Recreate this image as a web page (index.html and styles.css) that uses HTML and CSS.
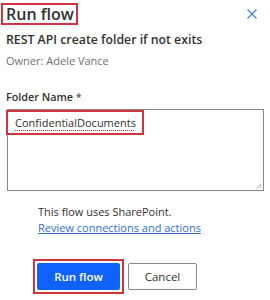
FILE: index.html
```html
<!DOCTYPE html>
<html lang="en">
<head>
    <meta charset="UTF-8">
    <meta name="viewport" content="width=device-width, initial-scale=1.0">
    <title>Run flow</title>
    <link rel="stylesheet" href="styles.css">
</head>
<body>
    <div class="panel">
        <div class="panel-header">
            <h1 class="panel-title highlight">Run flow</h1>
            <button class="close-button" aria-label="Close">
                <svg viewBox="0 0 10 10" fill="none" stroke="currentColor" stroke-width="1.1">
                    <path d="M0.5 0.5L9.5 9.5M9.5 0.5L0.5 9.5"/>
                </svg>
            </button>
        </div>

        <h2 class="flow-name">REST API create folder if not exits</h2>
        <p class="flow-owner">Owner: Adele Vance</p>

        <label class="field-label">Folder Name <span class="required">*</span></label>
        <div class="field-input">
            <span class="field-value highlight">ConfidentialDocuments</span>
            <svg class="resize-grip" viewBox="0 0 6 6" fill="none" stroke="#9a9a9a" stroke-width="0.8">
                <path d="M0.5 5.5L5.5 0.5M3 5.5L5.5 3"/>
            </svg>
        </div>

        <div class="flow-info">
            <p>This flow uses SharePoint.</p>
            <a href="#">Review connections and actions</a>
        </div>

        <div class="panel-actions">
            <span class="button-wrap highlight">
                <button class="primary-button">Run flow</button>
            </span>
            <button class="default-button">Cancel</button>
        </div>
    </div>
</body>
</html>
```

FILE: styles.css
```css
body {
    margin: 0;
    background: #fff;
    color: #323130;
    font-family: "Open Sans", sans-serif;
}

.panel {
    padding: 3px 6px 0 6px;
}

.highlight {
    border: 2px solid #d0343e;
}

.panel-header {
    display: flex;
    justify-content: space-between;
    align-items: flex-start;
}

.panel-title {
    margin: 0 0 0 -5px;
    padding: 0 2px 0 3px;
    font-size: 16px;
    line-height: 18px;
    font-weight: 600;
}

.close-button {
    background: transparent;
    border: none;
    padding: 0;
    margin: 6px 7px 0 0;
    width: 10px;
    height: 10px;
    color: #3f7ad6;
    cursor: pointer;
    display: flex;
}

.close-button svg {
    width: 10px;
    height: 10px;
}

.flow-name {
    margin: 6px 0 0 0;
    font-size: 12.3px;
    line-height: 18px;
    font-weight: 600;
}

.flow-owner {
    margin: 4px 0 0 0;
    font-size: 11px;
    line-height: 16px;
    color: #707070;
}

.field-label {
    display: block;
    margin-top: 20px;
    font-size: 10.8px;
    line-height: 16px;
    font-weight: 600;
}

.required {
    color: #605e5c;
}

.field-input {
    position: relative;
    margin: 4px 0 0 1px;
    height: 80px;
    border: 1px solid #8a8886;
    display: flex;
    flex-direction: column;
    align-items: flex-start;
}

.field-value {
    margin-left: -2px;
    padding: 0 6px 0 7px;
    width: 121px;
    font-size: 11px;
    line-height: 21px;
    text-decoration: underline dotted #d0343e;
    text-decoration-thickness: 1px;
    text-underline-offset: 3px;
}

.resize-grip {
    position: absolute;
    right: 1px;
    bottom: 1px;
    width: 6px;
    height: 6px;
}

.flow-info {
    margin: 13px 0 0 32px;
    font-size: 11px;
    line-height: 16px;
}

.flow-info p {
    margin: 0;
}

.flow-info a {
    color: #2f6fd0;
    text-decoration: underline;
}

.panel-actions {
    display: flex;
    align-items: center;
    gap: 4px;
    margin: 23px 0 0 27px;
}

.button-wrap {
    display: flex;
    padding: 2px;
}

.primary-button {
    width: 83px;
    height: 27px;
    background: #0f62fe;
    border: none;
    border-radius: 2px;
    color: #fff;
    font-family: inherit;
    font-size: 11.5px;
    font-weight: 600;
    cursor: pointer;
}

.default-button {
    width: 69px;
    height: 27px;
    background: #fff;
    border: 1px solid #8a8886;
    border-radius: 2px;
    color: #323130;
    font-family: inherit;
    font-size: 11.5px;
    cursor: pointer;
}
```
